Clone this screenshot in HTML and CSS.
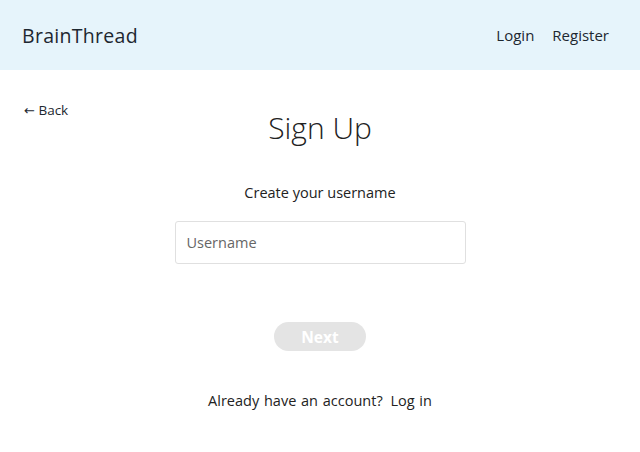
FILE: index.html
```html
<!DOCTYPE html>
<html lang="en">
<head>
<meta charset="utf-8">
<title>BrainThread - Sign Up</title>
<link rel="stylesheet" href="styles.css">
</head>
<body>
<header class="topbar">
  <div class="brand">BrainThread</div>
  <nav class="nav">
    <a class="nav-link" href="#">Login</a>
    <a class="nav-link" href="#">Register</a>
  </nav>
</header>
<main class="page">
  <a class="back" href="#"><span class="arrow">←</span> Back</a>
  <h1 class="title">Sign Up</h1>
  <p class="subtitle">Create your username</p>
  <input class="field" type="text" placeholder="Username">
  <button class="next" type="button">Next</button>
  <p class="footer-text">Already have an account? <a class="login-link" href="#">Log in</a></p>
</main>
</body>
</html>
```
FILE: styles.css
```css
* { box-sizing: border-box; }
html, body { margin: 0; padding: 0; }
body {
  width: 640px;
  height: 452px;
  overflow: hidden;
  background: #ffffff;
  color: #1a1a1a;
  font-family: "Open Sans", "Noto Sans", sans-serif;
}
.topbar {
  height: 70px;
  background: #e6f4fb;
  display: flex;
  align-items: center;
  justify-content: space-between;
  padding: 0 31px 0 22px;
}
.brand {
  font-size: 19.5px;
  color: #1d2730;
  letter-spacing: 0.3px;
}
.nav { display: flex; gap: 18px; }
.nav-link {
  color: #1d2730;
  text-decoration: none;
  font-size: 15px;
}
.page {
  display: flex;
  flex-direction: column;
  align-items: center;
  padding-top: 40px;
}
.back {
  align-self: flex-start;
  margin-left: 24px;
  font-size: 13.5px;
  color: #1d2730;
  text-decoration: none;
  height: 0;
  line-height: 0;
}
.arrow {
  font-family: "DejaVu Sans", sans-serif;
  font-size: 13px;
}
.title {
  margin: 0;
  font-weight: 300;
  font-size: 30px;
  color: #222;
  line-height: 36px;
}
.subtitle {
  margin: 37px 0 0;
  font-size: 14.5px;
  color: #222;
  line-height: 20px;
}
.field {
  margin-top: 18px;
  width: 291px;
  height: 43px;
  border: 1px solid #e0e0e0;
  border-radius: 3px;
  padding: 0 11px;
  font-family: inherit;
  font-size: 14.5px;
  color: #222;
  outline: none;
}
.field::placeholder { color: #666; }
.next {
  margin-top: 58px;
  width: 92px;
  height: 29px;
  border: none;
  border-radius: 15px;
  background: #e4e4e4;
  color: #ffffff;
  font-family: inherit;
  font-weight: 700;
  font-size: 15.5px;
}
.footer-text {
  margin: 40px 0 0;
  font-size: 14.5px;
  color: #222;
  word-spacing: 1px;
}
.login-link {
  color: #222;
  text-decoration: none;
  margin-left: 3px;
}
```
